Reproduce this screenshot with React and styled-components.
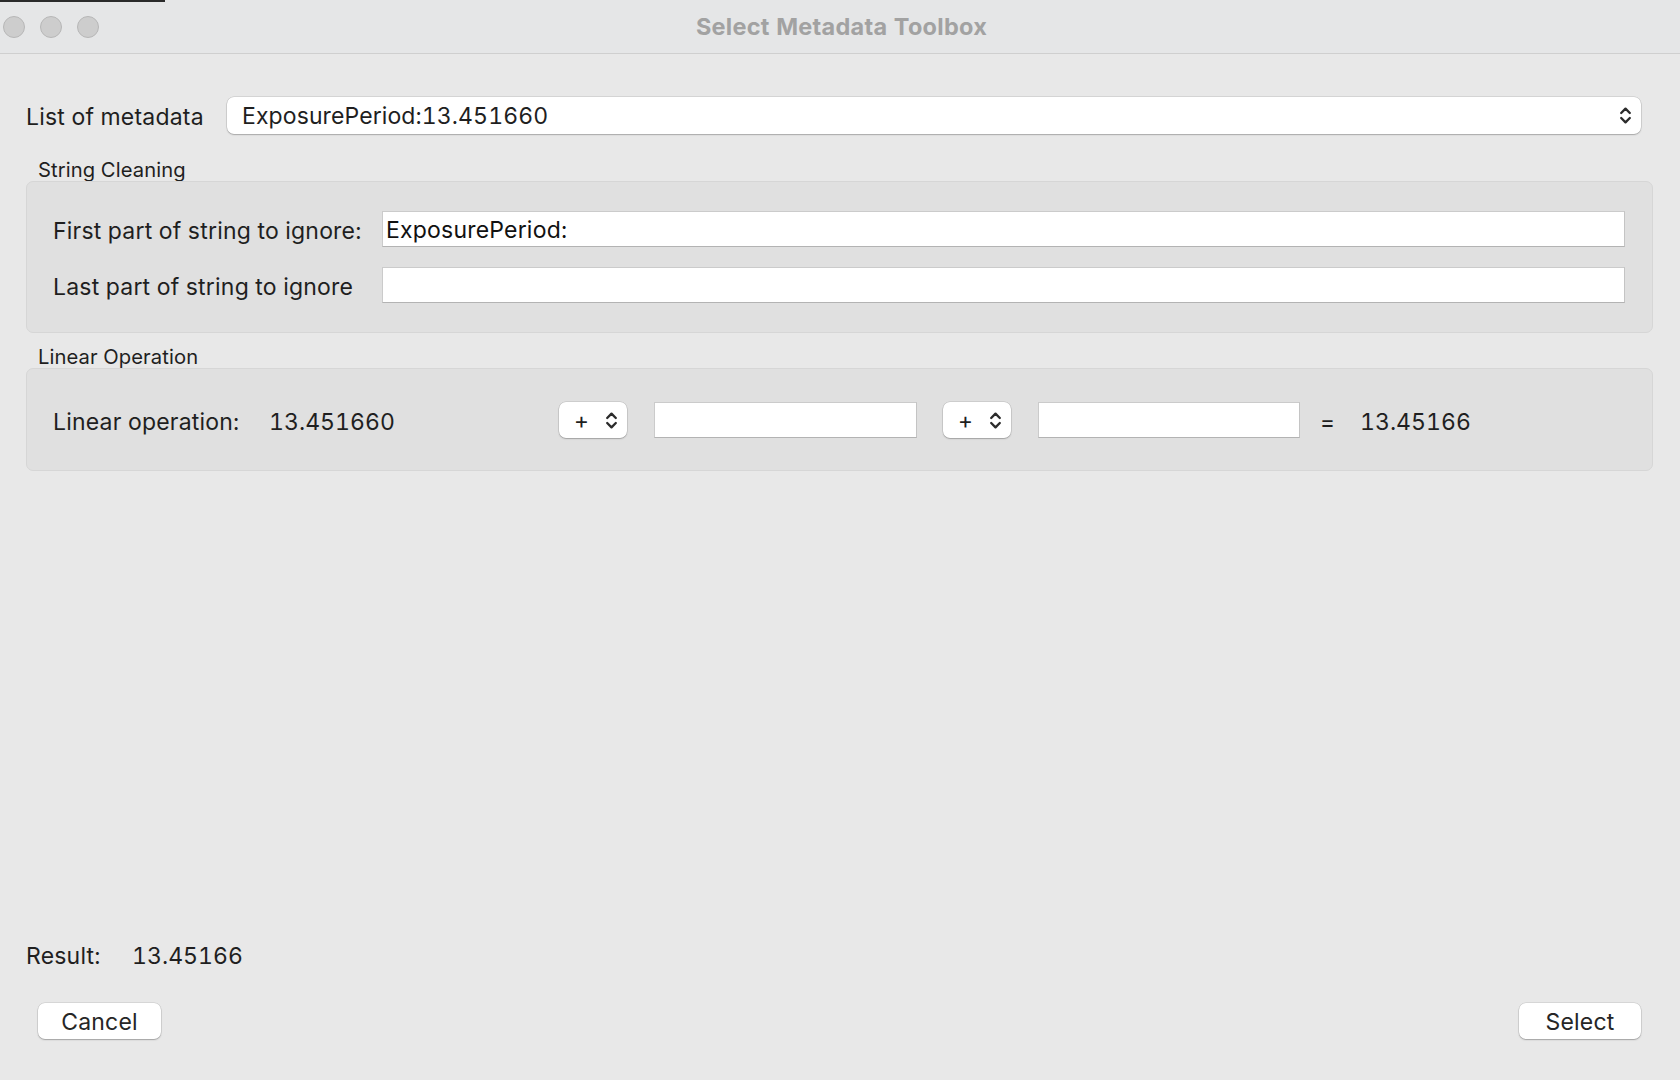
import React from "react";
import styled, { createGlobalStyle } from "styled-components";

const Global = createGlobalStyle`
  html, body { margin: 0; padding: 0; }
  body {
    font-family: Inter, "Noto Sans", "Liberation Sans", sans-serif;
    background: #e8e8e8;
    color: #1f1f1f;
    -webkit-font-smoothing: antialiased;
    font-variant-numeric: tabular-nums;
  }
  * { box-sizing: border-box; }
`;

const Window = styled.div`
  width: 1680px;
  height: 1080px;
  display: flex;
  flex-direction: column;
  background: #e8e8e8;
  overflow: hidden;
`;

const TitleBar = styled.div`
  position: relative;
  height: 54px;
  flex: none;
  display: grid;
  grid-template-columns: 1fr auto 1fr;
  align-items: center;
  background: #e5e6e7;
  border-bottom: 1px solid #cfcfcf;
  padding-left: 3px;
  &::before {
    content: "";
    position: absolute;
    left: 0;
    top: 0;
    width: 165px;
    height: 2px;
    background: #2a2a2a;
  }
`;

const Lights = styled.div`
  display: flex;
  gap: 15px;
  align-items: center;
`;

const Light = styled.span`
  width: 22px;
  height: 22px;
  border-radius: 50%;
  background: #cdcdcd;
  border: 1px solid #b7b7b7;
`;

const Title = styled.div`
  font-weight: 700;
  font-size: 23.5px;
  color: #a2a2a2;
  letter-spacing: 0.25px;
`;

const Content = styled.div`
  flex: 1;
  display: flex;
  flex-direction: column;
  padding: 43px 27px 41px 26px;
`;

const TopRow = styled.div`
  display: grid;
  grid-template-columns: 201px 1fr;
  align-items: center;
  padding-right: 12px;
`;

const Label = styled.span`
  font-size: 23px;
  letter-spacing: 0.2px;
  color: #1f1f1f;
  white-space: nowrap;
  padding-top: 3px;
  flex: none;
  width: ${(p) => (p.$w ? `${p.$w}px` : "auto")};
`;

const ComboBox = styled.div`
  height: 37px;
  background: #fff;
  border-radius: 7px;
  box-shadow: 0 0 0 0.5px rgba(0, 0, 0, 0.16), 0 1px 1.5px rgba(0, 0, 0, 0.22);
  display: flex;
  align-items: center;
  justify-content: space-between;
  padding: 0 9px 0 15px;
  font-size: 23px;
  letter-spacing: 0.1px;
  color: #1f1f1f;
  & > span {
    padding-top: 1px;
  }
`;

const SmallCombo = styled(ComboBox)`
  flex: none;
  height: 36px;
  width: 68px;
  padding: 0 9px 0 15px;
  margin-left: ${(p) => p.$ml || 0}px;
`;

const Chevrons = () => (
  <svg width="13" height="21" viewBox="0 0 13 21" fill="none">
    <path d="M2.2 8 L6.5 3.6 L10.8 8" stroke="#2b2b2b" strokeWidth="2.3" strokeLinecap="round" strokeLinejoin="round" />
    <path d="M2.2 13 L6.5 17.4 L10.8 13" stroke="#2b2b2b" strokeWidth="2.3" strokeLinecap="round" strokeLinejoin="round" />
  </svg>
);

const Group = styled.section`
  margin-top: ${(p) => p.$top}px;
  display: flex;
  flex-direction: column;
`;

const Legend = styled.div`
  font-size: 20.2px;
  line-height: 22px;
  letter-spacing: 0.1px;
  color: #1f1f1f;
  padding: 1px 0 0 12px;
`;

const Box = styled.div`
  background: #e0e0e0;
  border: 1px solid #d6d6d6;
  border-radius: 7px;
  padding: ${(p) => p.$pad};
`;

const FormGrid = styled.div`
  display: grid;
  grid-template-columns: 329px 1fr;
  row-gap: 20px;
  align-items: center;
`;

const TextInput = styled.div`
  flex: none;
  height: 36px;
  width: ${(p) => (p.$w ? `${p.$w}px` : "auto")};
  margin-left: ${(p) => p.$ml || 0}px;
  background: #fff;
  border: 1px solid #cbcbcb;
  border-bottom-color: #b3b3b3;
  border-right-color: #c4c4c4;
  display: flex;
  align-items: center;
  padding: 2px 3px 0;
  font-size: 23px;
  letter-spacing: 0.2px;
  color: #111;
`;

const LinearRow = styled.div`
  display: flex;
  align-items: center;
`;

const Value = styled.span`
  flex: none;
  font-size: 23px;
  letter-spacing: 0.05px;
  color: #1f1f1f;
  padding-top: 3px;
  width: ${(p) => (p.$w ? `${p.$w}px` : "auto")};
  margin-left: ${(p) => p.$ml || 0}px;
`;

const Spacer = styled.div`
  flex: 1;
`;

const ResultRow = styled.div`
  display: flex;
  align-items: center;
  height: 30px;
`;

const ButtonRow = styled.div`
  margin-top: 34px;
  display: flex;
  justify-content: space-between;
  padding: 0 12px;
`;

const Button = styled.button`
  width: ${(p) => p.$w}px;
  height: 36px;
  background: #fff;
  border: none;
  border-radius: 7px;
  box-shadow: 0 0 0 0.5px rgba(0, 0, 0, 0.14), 0 1px 1.5px rgba(0, 0, 0, 0.25);
  font-family: inherit;
  font-size: 23px;
  letter-spacing: 0.2px;
  color: #262626;
  padding: 1px 0 0;
`;

export default function App() {
  return (
    <>
      <Global />
      <Window>
        <TitleBar>
          <Lights>
            <Light />
            <Light />
            <Light />
          </Lights>
          <Title>Select Metadata Toolbox</Title>
          <div />
        </TitleBar>
        <Content>
          <TopRow>
            <Label>List of metadata</Label>
            <ComboBox>
              <span>ExposurePeriod:13.451660</span>
              <Chevrons />
            </ComboBox>
          </TopRow>

          <Group $top={24}>
            <Legend>String Cleaning</Legend>
            <Box $pad="29px 27px 29px 26px">
              <FormGrid>
                <Label>First part of string to ignore:</Label>
                <TextInput>ExposurePeriod:</TextInput>
                <Label>Last part of string to ignore</Label>
                <TextInput />
              </FormGrid>
            </Box>
          </Group>

          <Group $top={12}>
            <Legend>Linear Operation</Legend>
            <Box $pad="33px 27px 32px 26px">
              <LinearRow>
                <Label $w={216}>Linear operation:</Label>
                <Value $w={290}>13.451660</Value>
                <SmallCombo>
                  <span>+</span>
                  <Chevrons />
                </SmallCombo>
                <TextInput $w={263} $ml={27} />
                <SmallCombo $ml={26}>
                  <span>+</span>
                  <Chevrons />
                </SmallCombo>
                <TextInput $w={262} $ml={27} />
                <Value $ml={20}>=</Value>
                <Value $ml={25}>13.45166</Value>
              </LinearRow>
            </Box>
          </Group>

          <Spacer />

          <ResultRow>
            <Label $w={106}>Result:</Label>
            <Value>13.45166</Value>
          </ResultRow>

          <ButtonRow>
            <Button $w={123}>Cancel</Button>
            <Button $w={122}>Select</Button>
          </ButtonRow>
        </Content>
      </Window>
    </>
  );
}
